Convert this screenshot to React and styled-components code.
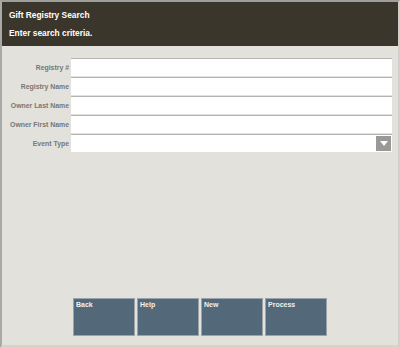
import React from "react";
import styled, { createGlobalStyle } from "styled-components";

const Global = createGlobalStyle`
  html, body {
    margin: 0;
    padding: 0;
    background: #e2e1dc;
  }
  * { box-sizing: border-box; }
`;

const Screen = styled.div`
  width: 400px;
  height: 348px;
  display: flex;
  flex-direction: column;
  background: #e2e1dc;
  border-top: 2px solid #9e9e9a;
  border-left: 2px solid #a9a9a5;
  border-right: 2px solid #d0cfca;
  border-bottom: 3px solid #d6d4c6;
  font-family: "Liberation Sans", Arial, sans-serif;
`;

const Header = styled.div`
  height: 44px;
  background: #3a362c;
  color: #fff;
  font-weight: bold;
  font-size: 8.4px;
  padding: 8px 0 0 7px;
  display: flex;
  flex-direction: column;
  gap: 8px;
`;

const Form = styled.div`
  display: flex;
  flex-direction: column;
  gap: 1px;
  padding: 12px 6px 0 0;
`;

const Row = styled.div`
  display: flex;
  align-items: center;
  height: 18px;
`;

const Label = styled.label`
  width: 69px;
  padding-right: 2px;
  text-align: right;
  font-size: 6.9px;
  font-weight: bold;
  color: #777775;
  white-space: nowrap;
`;

const Field = styled.div`
  flex: 1;
  height: 18px;
  background: #fff;
  border-top: 1px solid #b4b4b0;
  display: flex;
  justify-content: flex-end;
  align-items: flex-start;
`;

const Drop = styled.div`
  width: 15px;
  height: 15px;
  margin: 1px 1px 0 0;
  background: #999996;
  display: flex;
  align-items: center;
  justify-content: center;
`;

const Spacer = styled.div`
  flex: 1;
`;

const Buttons = styled.div`
  display: flex;
  gap: 2px;
  padding: 0 0 9px 71px;
`;

const Btn = styled.div`
  width: 62px;
  height: 38px;
  background: #536879;
  border: 1px solid #9aa3ab;
  color: #f2f2f2;
  font-size: 7px;
  font-weight: bold;
  padding: 2px 2px;
`;

const fields = ["Registry #", "Registry Name", "Owner Last Name", "Owner First Name"];

export default function App() {
  return (
    <>
      <Global />
      <Screen>
        <Header>
          <span>Gift Registry Search</span>
          <span>Enter search criteria.</span>
        </Header>
        <Form>
          {fields.map((f) => (
            <Row key={f}>
              <Label>{f}</Label>
              <Field />
            </Row>
          ))}
          <Row>
            <Label>Event Type</Label>
            <Field>
              <Drop>
                <svg width="8" height="5" viewBox="0 0 8 5">
                  <path d="M0 0H8L4 5Z" fill="#fff" />
                </svg>
              </Drop>
            </Field>
          </Row>
        </Form>
        <Spacer />
        <Buttons>
          {["Back", "Help", "New", "Process"].map((b) => (
            <Btn key={b}>{b}</Btn>
          ))}
        </Buttons>
      </Screen>
    </>
  );
}
